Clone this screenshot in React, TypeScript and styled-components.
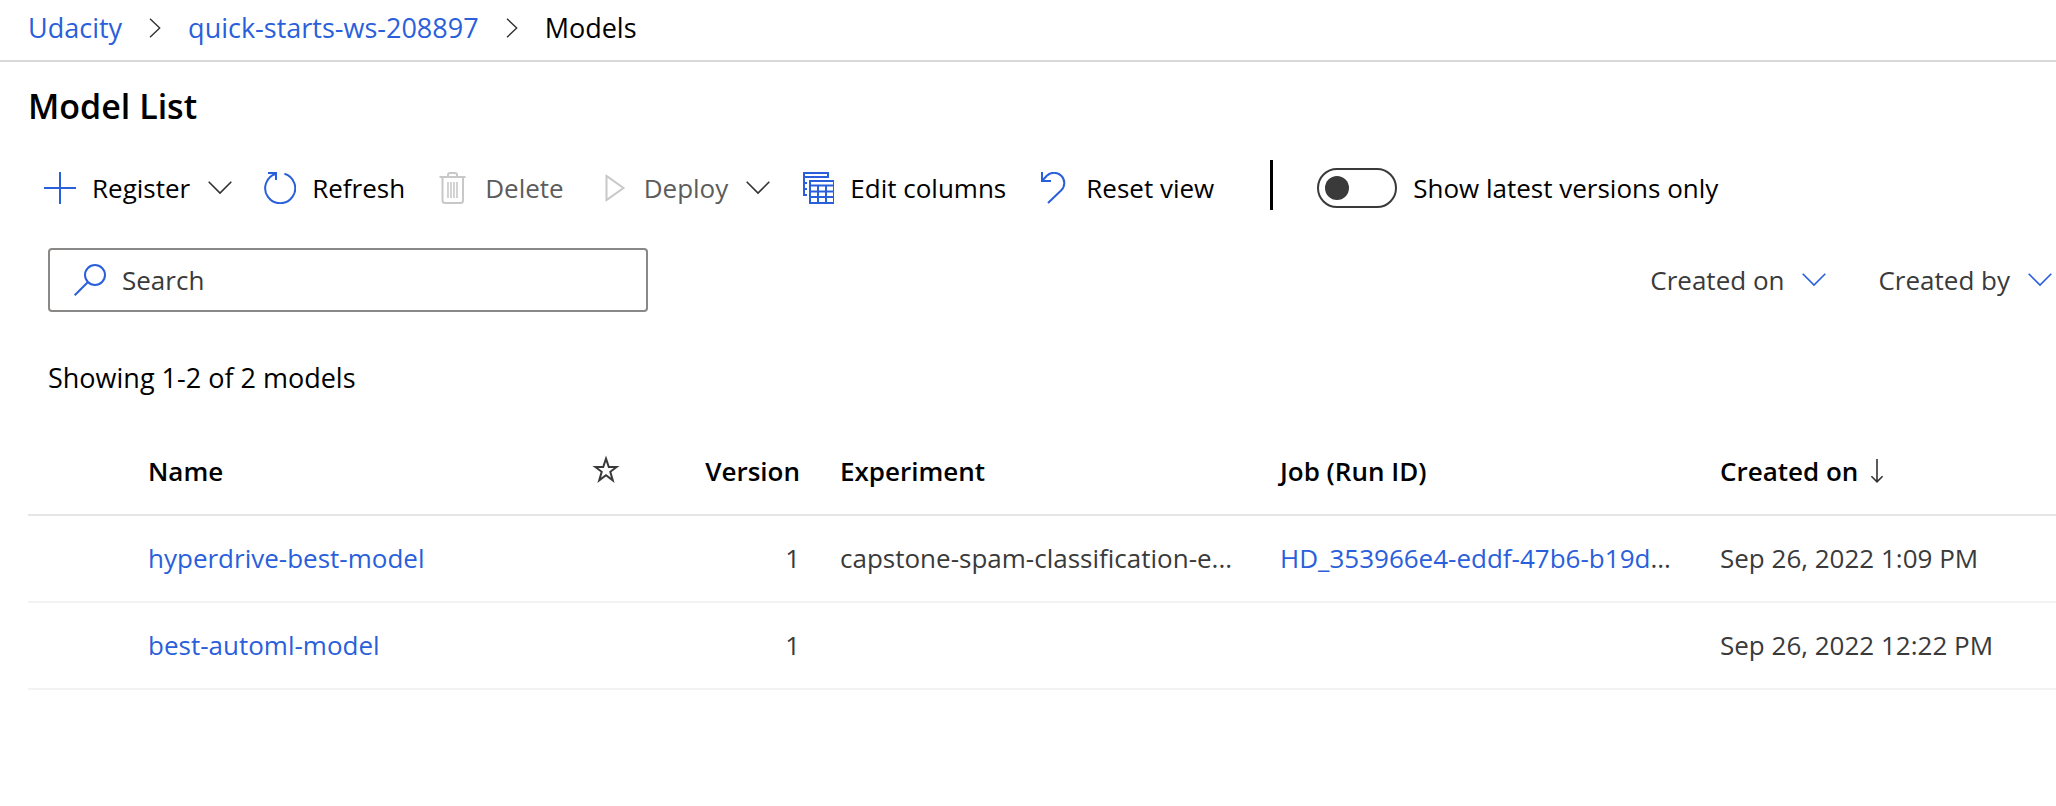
import React from "react";
import styled, { createGlobalStyle } from "styled-components";

const color = {
  link: "#2a5fdb",
  text: "#000000",
  body: "#3a3a3a",
  disabledText: "#5c5c5c",
  disabledIcon: "#c8c8c8",
  field: "#8a8886",
};

const GlobalStyle = createGlobalStyle`
  body {
    margin: 0;
    background: #ffffff;
    color: ${color.text};
    font-family: "Open Sans", "Noto Sans", sans-serif;
    font-size: 26px;
    line-height: 36px;
  }
  *, *::before { box-sizing: border-box; }
`;

const Breadcrumb = styled.nav`
  padding: 10px 28px 14px;
  border-bottom: 2px solid #d8d8d8;
  font-size: 27px;

  ol {
    display: flex;
    align-items: center;
    gap: 27px;
    margin: 0;
    padding: 0;
    list-style: none;
  }
  li {
    display: flex;
    align-items: center;
    gap: 27px;
  }
`;

const Link = styled.a`
  color: ${color.link};
  text-decoration: none;
`;

const Title = styled.h1`
  margin: 22px 28px 32px;
  font-size: 34px;
  font-weight: 600;
  line-height: 44px;
`;

const Toolbar = styled.div`
  display: flex;
  align-items: center;
  gap: 32px;
  height: 56px;
  padding-left: 44px;
  white-space: nowrap;
`;

const CommandButton = styled.button`
  display: flex;
  align-items: center;
  gap: 16px;
  padding: 0;
  border: 0;
  background: none;
  color: ${color.text};
  font: inherit;
  cursor: pointer;

  &:disabled {
    color: ${color.disabledText};
    cursor: default;
  }
`;

const Divider = styled.div`
  align-self: flex-start;
  width: 3px;
  height: 50px;
  margin: 0 12px 0 24px;
  background: #000000;
`;

const ToggleField = styled.label`
  display: flex;
  align-items: center;
  gap: 16px;
`;

const Toggle = styled.input`
  appearance: none;
  display: flex;
  align-items: center;
  width: 80px;
  height: 40px;
  margin: 0;
  padding: 0 6px;
  border: 2px solid ${color.body};
  border-radius: 20px;

  &::before {
    content: "";
    width: 24px;
    height: 24px;
    border-radius: 50%;
    background: ${color.body};
  }
  &:checked {
    justify-content: flex-end;
  }
`;

const FilterBar = styled.div`
  display: flex;
  align-items: center;
  justify-content: space-between;
  margin: 32px 4px 48px 48px;
`;

const SearchField = styled.label`
  display: flex;
  align-items: center;
  gap: 16px;
  width: 600px;
  height: 64px;
  padding: 0 24px;
  border: 2px solid ${color.field};
  border-radius: 4px;
`;

const SearchInput = styled.input`
  flex: 1;
  min-width: 0;
  padding: 0;
  border: 0;
  outline: 0;
  background: none;
  color: ${color.body};
  font: inherit;

  &::placeholder {
    color: ${color.body};
    opacity: 1;
  }
`;

const Filters = styled.div`
  display: flex;
  gap: 52px;
`;

const FilterButton = styled(CommandButton)`
  color: ${color.body};
`;

const Summary = styled.p`
  margin: 0 48px 32px;
  font-size: 27px;
`;

const TableWrap = styled.div`
  margin-left: 28px;
`;

const Table = styled.table`
  width: 100%;
  table-layout: fixed;
  border-spacing: 0;
`;

const Col = styled.col<{ $width?: number }>`
  width: ${(p) => (p.$width ? `${p.$width}px` : "auto")};
`;

type Align = "left" | "center" | "right";

const HeaderCell = styled.th<{ $align?: Align }>`
  height: 88px;
  padding: 0 ${(p) => (p.$align === "right" ? 24 : 16)}px 0 16px;
  border-bottom: 2px solid #e6e6e6;
  font-weight: 600;
  text-align: ${(p) => p.$align ?? "left"};
  white-space: nowrap;
`;

const Cell = styled.td<{ $align?: Align }>`
  height: 87px;
  padding: 0 ${(p) => (p.$align === "right" ? 24 : 16)}px 2px 16px;
  border-bottom: 2px solid #f3f3f3;
  color: ${color.body};
  text-align: ${(p) => p.$align ?? "left"};
  white-space: nowrap;
`;

const SortLabel = styled.span`
  display: flex;
  align-items: center;
  gap: 12px;
`;

const StarLabel = styled.span`
  display: flex;
  justify-content: center;
`;

const Glyph = styled.svg`
  flex: none;
  fill: none;
`;

const Chevron = styled(Glyph)`
  margin-left: 2px;
`;

const Icon = ({ children, stroke = color.link }: { children: React.ReactNode; stroke?: string }) => (
  <Glyph width="32" height="32" viewBox="0 0 32 32" stroke={stroke} strokeWidth="2" aria-hidden="true">
    {children}
  </Glyph>
);

const ChevronDown = ({ stroke = "#333333" }: { stroke?: string }) => (
  <Chevron width="24" height="14" viewBox="0 0 24 14" stroke={stroke} strokeWidth="1.6" aria-hidden="true">
    <path d="M0.7 0.8 12 12.1 23.3 0.8" />
  </Chevron>
);

const ChevronRight = () => (
  <Glyph width="12" height="20" viewBox="0 0 12 20" stroke="#333333" strokeWidth="1.4" aria-hidden="true">
    <path d="M1 0.7 10.7 10 1 19.3" />
  </Glyph>
);

const AddIcon = () => (
  <Icon>
    <path d="M16 0V32M0 16H32" />
  </Icon>
);

const RefreshIcon = () => (
  <Icon>
    <path d="M20.4 1.8A15 15 0 1 1 12 1.8M4 1H12V8" />
  </Icon>
);

const DeleteIcon = () => (
  <Icon stroke={color.disabledIcon}>
    <path d="M2.5 5H28.5M11 5V3Q11 1 13 1H18Q20 1 20 3V5M5.5 5V28.5Q5.5 31 8 31H23.5Q26 31 26 28.5V5" />
    <path d="M11 10V26M14 10V26M17 10V26M20 10V26" strokeWidth="1.6" />
  </Icon>
);

const PlayIcon = () => (
  <Icon stroke={color.disabledIcon}>
    <path d="M10.5 4V28L27.5 16Z" />
  </Icon>
);

const ColumnsIcon = () => (
  <Icon>
    <path d="M5 23H2V1H26V5H2M2 11H5M2 17H5" />
    <path d="M8 9H32V31H8ZM8 13.5H32M8 19.5H32M8 25H32M16 13V31M24 13V31" />
  </Icon>
);

const ResetIcon = () => (
  <Icon>
    <path d="M4 0V9H13M4 9 8.8 3.8A10.2 10.2 0 0 1 23.3 18.3L10 31" />
  </Icon>
);

const SearchIcon = () => (
  <Icon>
    <circle cx="21" cy="11" r="10" />
    <path d="M14 18 0.7 31.3" />
  </Icon>
);

const StarIcon = () => (
  <Glyph width="28" height="32" viewBox="0 0 28 32" stroke="#3a3a3a" strokeWidth="2" role="img" aria-label="Favorite">
    <path d="M14 3.6 16.8 12H24.6L18.3 16.8 20.8 25.4 14 20.3 7.2 25.4 9.7 16.8 3.4 12H11.2Z" />
  </Glyph>
);

const SortDownIcon = () => (
  <Glyph width="14" height="24" viewBox="0 0 14 24" stroke="#333333" strokeWidth="1.6" aria-hidden="true">
    <path d="M7 0V23M1.4 17.2 7 22.8 12.6 17.2" />
  </Glyph>
);

interface Model {
  name: string;
  version: number;
  experiment?: string;
  job?: string;
  created: string;
}

const models: Model[] = [
  {
    name: "hyperdrive-best-model",
    version: 1,
    experiment: "capstone-spam-classification-e...",
    job: "HD_353966e4-eddf-47b6-b19d",
    created: "Sep 26, 2022 1:09 PM",
  },
  { name: "best-automl-model", version: 1, created: "Sep 26, 2022 12:22 PM" },
];

export default function App() {
  return (
    <>
      <GlobalStyle />
      <Breadcrumb aria-label="Breadcrumb">
        <ol>
          <li>
            <Link href="#udacity">Udacity</Link>
            <ChevronRight />
          </li>
          <li>
            <Link href="#workspace">quick-starts-ws-208897</Link>
            <ChevronRight />
          </li>
          <li aria-current="page">Models</li>
        </ol>
      </Breadcrumb>
      <main>
        <Title>Model List</Title>
        <Toolbar role="toolbar" aria-label="Model actions">
          <CommandButton type="button" aria-haspopup="menu">
            <AddIcon />
            Register
            <ChevronDown />
          </CommandButton>
          <CommandButton type="button">
            <RefreshIcon />
            Refresh
          </CommandButton>
          <CommandButton type="button" disabled>
            <DeleteIcon />
            Delete
          </CommandButton>
          <CommandButton type="button" aria-haspopup="menu" disabled>
            <PlayIcon />
            Deploy
            <ChevronDown />
          </CommandButton>
          <CommandButton type="button">
            <ColumnsIcon />
            Edit columns
          </CommandButton>
          <CommandButton type="button">
            <ResetIcon />
            Reset view
          </CommandButton>
          <Divider />
          <ToggleField>
            <Toggle type="checkbox" role="switch" />
            Show latest versions only
          </ToggleField>
        </Toolbar>
        <FilterBar>
          <SearchField>
            <SearchIcon />
            <SearchInput type="text" placeholder="Search" aria-label="Search" />
          </SearchField>
          <Filters>
            <FilterButton type="button" aria-haspopup="listbox">
              Created on
              <ChevronDown stroke={color.link} />
            </FilterButton>
            <FilterButton type="button" aria-haspopup="listbox">
              Created by
              <ChevronDown stroke={color.link} />
            </FilterButton>
          </Filters>
        </FilterBar>
        <Summary>Showing 1-2 of 2 models</Summary>
        <TableWrap>
          <Table>
            <colgroup>
              <Col $width={104} />
              <Col $width={428} />
              <Col $width={92} />
              <Col $width={172} />
              <Col $width={440} />
              <Col $width={440} />
              <Col />
            </colgroup>
            <thead>
              <tr>
                <HeaderCell />
                <HeaderCell scope="col">Name</HeaderCell>
                <HeaderCell scope="col" $align="center">
                  <StarLabel>
                    <StarIcon />
                  </StarLabel>
                </HeaderCell>
                <HeaderCell scope="col" $align="right">Version</HeaderCell>
                <HeaderCell scope="col">Experiment</HeaderCell>
                <HeaderCell scope="col">Job (Run ID)</HeaderCell>
                <HeaderCell scope="col" aria-sort="descending">
                  <SortLabel>
                    Created on
                    <SortDownIcon />
                  </SortLabel>
                </HeaderCell>
              </tr>
            </thead>
            <tbody>
              {models.map((model) => (
                <tr key={model.name}>
                  <Cell />
                  <Cell>
                    <Link href={`#${model.name}`}>{model.name}</Link>
                  </Cell>
                  <Cell />
                  <Cell $align="right">{model.version}</Cell>
                  <Cell>{model.experiment}</Cell>
                  <Cell>
                    {model.job && (
                      <>
                        <Link href={`#${model.job}`}>{model.job}</Link>...
                      </>
                    )}
                  </Cell>
                  <Cell>{model.created}</Cell>
                </tr>
              ))}
            </tbody>
          </Table>
        </TableWrap>
      </main>
    </>
  );
}
